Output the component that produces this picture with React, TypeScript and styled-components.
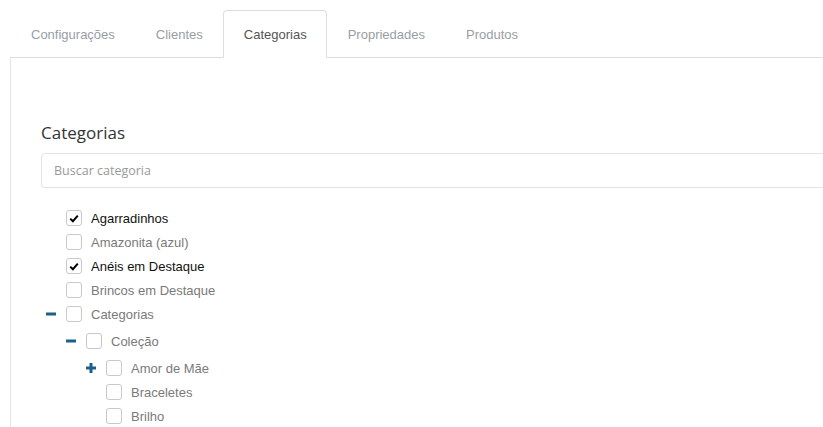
import React from 'react'
import styled, { createGlobalStyle } from 'styled-components'

const GlobalStyle = createGlobalStyle`
    html, body {
        margin: 0;
        padding: 0;
        background: #fff;
    }
    body {
        font-family: "Liberation Sans", Arial, sans-serif;
        font-size: 13px;
    }
`

const Viewport = styled.div`
    width: 100vw;
    height: 100vh;
    overflow: hidden;
`

const Page = styled.div`
    width: 1100px;
    padding: 10px 0 0 10px;
`

const TabBar = styled.ul`
    display: flex;
    margin: 0;
    padding: 0;
    list-style: none;
    border-bottom: 1px solid #dddddd;
`

const Tab = styled.li<{ active?: boolean }>`
    margin-bottom: -1px;
    padding: 0 19px 0 20px;
    height: 46px;
    display: flex;
    align-items: center;
    border: 1px solid ${p => p.active ? '#dddddd' : 'transparent'};
    border-bottom-color: ${p => p.active ? '#fff' : 'transparent'};
    border-radius: 4px 4px 0 0;
    background: ${p => p.active ? '#fff' : 'transparent'};
    background-clip: padding-box;
    color: ${p => p.active ? '#555555' : '#999ea3'};
    cursor: pointer;
`

const Panel = styled.div`
    border-left: 1px solid #e5e5e5;
    padding: 62px 30px 0 30px;
    height: 400px;
`

const Title = styled.h3`
    margin: 0 0 7px 0;
    font-family: "Open Sans", sans-serif;
    font-weight: 400;
    font-size: 17px;
    color: #333;
    line-height: 26px;
`

const Search = styled.input`
    box-sizing: border-box;
    display: block;
    width: 100%;
    height: 35px;
    padding: 0 12px;
    border: 1px solid #e3e3e3;
    border-radius: 4px;
    font-family: "Open Sans", sans-serif;
    font-size: 12.5px;
    color: #555;
    outline: none;

    &::placeholder {
        color: #999;
    }
`

const Tree = styled.ul<{ nested?: boolean }>`
    list-style: none;
    margin: ${p => p.nested ? '3px 0 0 0' : '18px 0 0 0'};
    padding: 0 0 0 ${p => p.nested ? '20px' : '25px'};
`

const Node = styled.li`
    margin: 0;
`

const Row = styled.div`
    position: relative;
    display: flex;
    align-items: center;
    height: 24px;
`

const Toggle = styled.span`
    position: absolute;
    left: -20px;
    top: 7px;
    width: 10px;
    height: 10px;
    display: flex;
`

const Box = styled.span`
    box-sizing: border-box;
    width: 16px;
    height: 16px;
    border: 1px solid #c8c8c8;
    border-radius: 3px;
    background: #fff;
    display: flex;
    align-items: center;
    justify-content: center;
    flex-shrink: 0;
`

const Label = styled.span<{ checked?: boolean }>`
    margin-left: 9px;
    color: ${p => p.checked ? '#111' : '#7a7a7a'};
`

type Item = { name: string, checked?: boolean, open?: boolean, children?: Item[] }

const data: Item[] = [
    { name: 'Agarradinhos', checked: true },
    { name: 'Amazonita (azul)' },
    { name: 'Anéis em Destaque', checked: true },
    { name: 'Brincos em Destaque' },
    {
        name: 'Categorias', open: true, children: [
            {
                name: 'Coleção', open: true, children: [
                    { name: 'Amor de Mãe', open: false, children: [{ name: 'x' }] },
                    { name: 'Braceletes' },
                    { name: 'Brilho' },
                ]
            },
        ]
    },
]

const Check = () => <svg width="10" height="9" viewBox="0 0 10 9">
    <path d="M1.2 4.6 L3.9 7.2 L8.8 1.6" fill="none" stroke="#000" strokeWidth="2" />
</svg>

const ToggleIcon = ({ open }: { open?: boolean }) => <svg width="10" height="10" viewBox="0 0 10 10">
    <rect x="0" y="3.5" width="10" height="3" fill="#1f5f8b" />
    {!open && <rect x="3.5" y="0" width="3" height="10" fill="#1f5f8b" />}
</svg>

const TreeNode = ({ item }: { item: Item }) => <Node>
    <Row>
        {item.children && <Toggle><ToggleIcon open={item.open} /></Toggle>}
        <Box>{item.checked && <Check />}</Box>
        <Label checked={item.checked}>{item.name}</Label>
    </Row>
    {item.children && item.open && <Tree nested>
        {item.children.map(c => <TreeNode key={c.name} item={c} />)}
    </Tree>}
</Node>

const tabs = ['Configurações', 'Clientes', 'Categorias', 'Propriedades', 'Produtos']

export default function App() {
    return <Viewport>
        <GlobalStyle />
        <Page>
            <TabBar>
                {tabs.map(t => <Tab key={t} active={t === 'Categorias'}>{t}</Tab>)}
            </TabBar>
            <Panel>
                <Title>Categorias</Title>
                <Search placeholder="Buscar categoria" />
                <Tree>
                    {data.map(i => <TreeNode key={i.name} item={i} />)}
                </Tree>
            </Panel>
        </Page>
    </Viewport>
}
